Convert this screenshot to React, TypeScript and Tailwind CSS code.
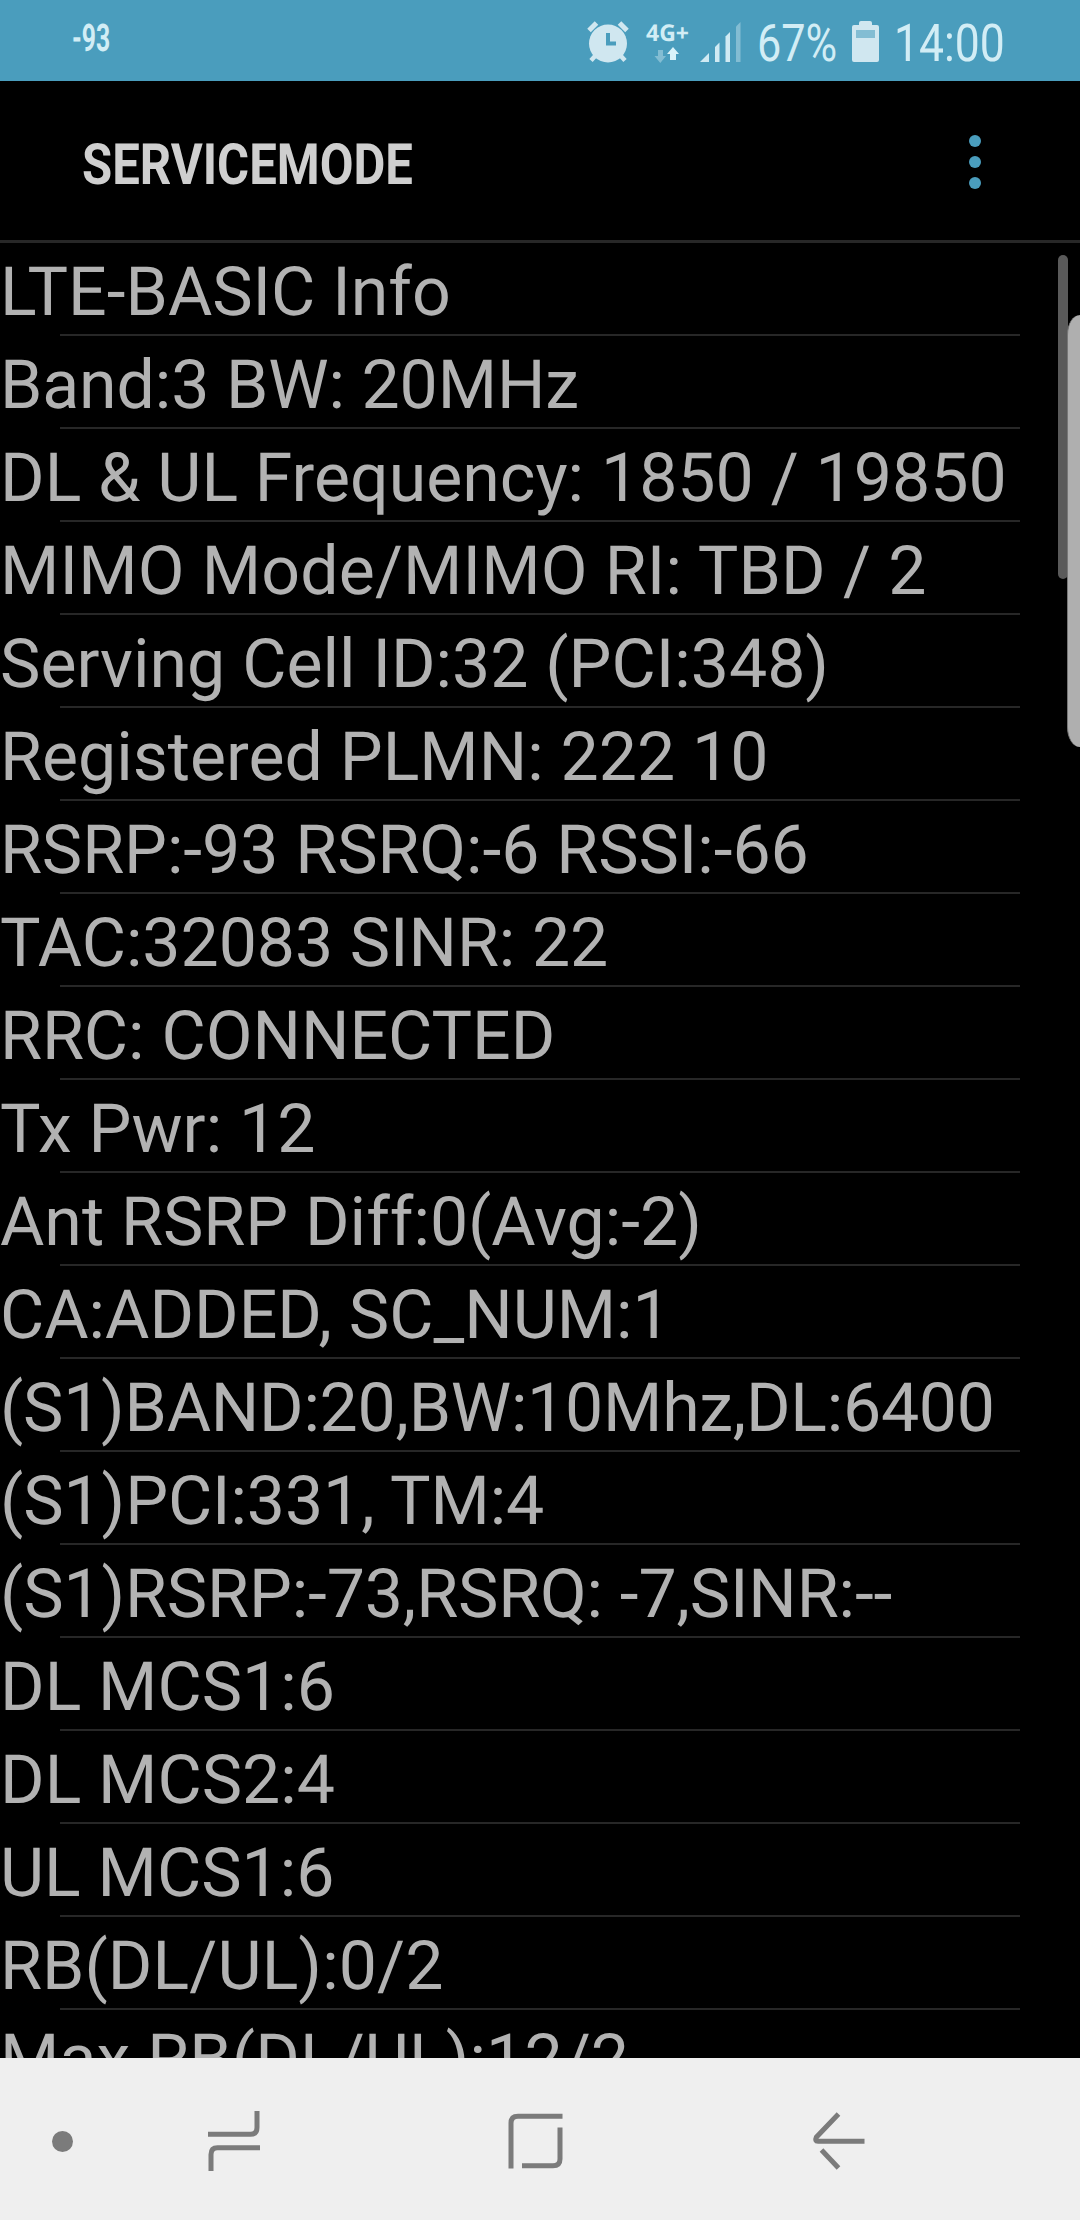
import clsx from 'clsx';

interface Row {
  text: string;
  tracking?: string;
}

const rows: Row[] = [
  { text: 'LTE-BASIC Info' },
  { text: 'Band:3 BW: 20MHz', tracking: 'tracking-[-0.12px]' },
  { text: 'DL & UL Frequency: 1850 / 19850' },
  { text: 'MIMO Mode/MIMO RI: TBD / 2', tracking: 'tracking-[0.16px]' },
  { text: 'Serving Cell ID:32 (PCI:348)' },
  { text: 'Registered PLMN: 222 10' },
  { text: 'RSRP:-93 RSRQ:-6 RSSI:-66', tracking: 'tracking-[-0.04px]' },
  { text: 'TAC:32083 SINR: 22', tracking: 'tracking-[-0.08px]' },
  { text: 'RRC: CONNECTED' },
  { text: 'Tx Pwr: 12' },
  { text: 'Ant RSRP Diff:0(Avg:-2)' },
  { text: 'CA:ADDED, SC_NUM:1' },
  { text: '(S1)BAND:20,BW:10Mhz,DL:6400', tracking: 'tracking-[-0.25px]' },
  { text: '(S1)PCI:331, TM:4', tracking: 'tracking-[-0.1px]' },
  { text: '(S1)RSRP:-73,RSRQ: -7,SINR:--', tracking: 'tracking-[-0.12px]' },
  { text: 'DL MCS1:6' },
  { text: 'DL MCS2:4' },
  { text: 'UL MCS1:6' },
  { text: 'RB(DL/UL):0/2', tracking: 'tracking-[0.1px]' },
  { text: 'Max RB(DL/UL):12/2', tracking: 'tracking-[0.1px]' },
];

// Text squeezed to a condensed width
function Condensed({ text, className }: { text: string; className: string }) {
  return <span className={clsx('block origin-left whitespace-nowrap', className)}>{text}</span>;
}

function AlarmIcon() {
  return (
    <svg width="42" height="42" viewBox="0 0 42 42" className="shrink-0">
      <circle cx="21" cy="22.5" r="19" fill="#d0e7f0" />
      <path d="M2 9.5L9.5 2M32.5 2L40 9.5" stroke="#d0e7f0" strokeWidth="5" />
      <path d="M9 34L4 39.5M33 34L38 39.5" stroke="#d0e7f0" strokeWidth="4.5" />
      <path d="M21 12V22.5H29" fill="none" stroke="#4a9dbd" strokeWidth="4" />
    </svg>
  );
}

function DataArrows() {
  return (
    <svg width="26" height="16" viewBox="0 0 26 16" className="ml-2">
      <path d="M4 3H9V9H12L6.3 16L0.5 9H4Z" fill="#83bdd3" />
      <path d="M16 13V7H13L19 0L25 7H22V13Z" fill="#d9f3fa" />
    </svg>
  );
}

function SignalIcon() {
  return (
    <svg width="41" height="41" viewBox="0 0 41 41" className="shrink-0">
      <path d="M0 40L9 31V40Z" fill="#d0eaf3" />
      <path d="M15 40V25L19.5 20.5V40Z" fill="#d0eaf3" />
      <path d="M25.5 40V14.5L30 10V40Z" fill="#d0eaf3" />
      <path d="M36 40V4.5L40.5 0V40Z" fill="#83bdd3" />
    </svg>
  );
}

function BatteryIcon() {
  return (
    <svg width="27" height="41" viewBox="0 0 27 41" className="shrink-0">
      <path d="M7 4V2Q7 0 9 0H18Q20 0 20 2V4H25Q27 4 27 6V39Q27 41 25 41H2Q0 41 0 39V6Q0 4 2 4Z" fill="#d0e7f0" />
      <rect x="4" y="9" width="19" height="8" fill="#83bdd3" />
    </svg>
  );
}

function StatusBar() {
  return (
    <header className="flex h-[81px] shrink-0 items-start bg-[#4a9dbd] text-[#d2edf5]">
      <div className="ml-[72px] w-[515px] pt-[17px]">
        <Condensed text="-93" className="scale-x-[0.65] text-[38px] leading-[44px] font-bold" />
      </div>
      <div className="mt-[21px]">
        <AlarmIcon />
      </div>
      <div className="ml-[17px] w-[54px] pt-[17px]">
        <div className="font-['Open_Sans'] text-[23px] leading-[30px] font-bold">4G+</div>
        <DataArrows />
      </div>
      <div className="mt-[22px]">
        <SignalIcon />
      </div>
      <div className="ml-[16px] w-[95px] pt-[14px]">
        <Condensed text="67%" className="scale-x-[0.83] text-[52px] leading-[60px]" />
      </div>
      <div className="mt-[21px]">
        <BatteryIcon />
      </div>
      <div className="ml-[15px] pt-[14px]">
        <Condensed text="14:00" className="scale-x-[0.855] text-[52px] leading-[60px]" />
      </div>
    </header>
  );
}

function TitleBar() {
  return (
    <div className="flex h-[162px] shrink-0 items-center border-b-[3px] border-[#272727] pl-[82px]">
      <div className="w-[887px] pt-[8px]">
        <Condensed text="SERVICEMODE" className="scale-x-[0.86] text-[57px] leading-[66px] font-bold text-[#cfcfcf]" />
      </div>
      <div className="flex flex-col gap-[8.6px] pt-[3px]">
        <span className="size-[12px] rounded-full bg-[#4a9dbd]" />
        <span className="size-[12px] rounded-full bg-[#4a9dbd]" />
        <span className="size-[12px] rounded-full bg-[#4a9dbd]" />
      </div>
    </div>
  );
}

function InfoList() {
  return (
    <main className="relative h-[1815px] shrink-0 overflow-hidden">
      <ul>
        {rows.map((row) => (
          <li key={row.text} className="h-[93px]">
            <p className={clsx('h-[91px] text-[68px] leading-[99px] whitespace-nowrap text-[#b2b2b2]', row.tracking)}>
              {row.text}
            </p>
            <div className="mx-[60px] h-[2px] bg-[#272727]" />
          </li>
        ))}
      </ul>
      {/* scrollbar thumb and edge panel handle */}
      <div className="absolute top-[12px] left-[1058px] h-[324px] w-[10px] rounded-full bg-[#5a5a5a]" />
      <div className="absolute top-[72px] left-[1067px] h-[432px] w-[13px] rounded-l-[13px_20px] border-l border-[#777] bg-[#afafaf]" />
    </main>
  );
}

function NavBar() {
  return (
    <nav className="flex h-[162px] shrink-0 items-center bg-[#efefef] pt-[4px] pl-[52px]">
      <span className="size-[21px] rounded-full bg-[#7b7b7b]" />
      <svg width="52" height="60" viewBox="0 0 52 60" className="ml-[134.5px]" fill="none" stroke="#7b7b7b" strokeWidth="5">
        <path d="M0 23.3H42.5Q49 23.3 49 16.5V0" />
        <path d="M52 36.7H9.5Q3 36.7 3 43.5V60" />
      </svg>
      <svg width="55" height="56" viewBox="0 0 55 56" className="ml-[248px]" fill="none" stroke="#7b7b7b" strokeWidth="5">
        <path d="M3 55.5V10Q3 3.2 10 3.2H54.5" />
        <path d="M52 14.5V46Q52 52.8 45 52.8H14" />
      </svg>
      <svg width="54" height="60" viewBox="0 0 54 60" className="ml-[249px]" fill="none" stroke="#7b7b7b" strokeWidth="5">
        <path d="M26.5 3L4.3 26.2Q2.5 30.2 6 30.2H52.5" />
        <path d="M9.5 39L26.5 57" />
      </svg>
    </nav>
  );
}

export default function App() {
  return (
    <div className="flex h-[2220px] w-[1080px] flex-col overflow-hidden bg-black font-[Roboto,sans-serif] [text-rendering:geometricPrecision]">
      <StatusBar />
      <TitleBar />
      <InfoList />
      <NavBar />
    </div>
  );
}
